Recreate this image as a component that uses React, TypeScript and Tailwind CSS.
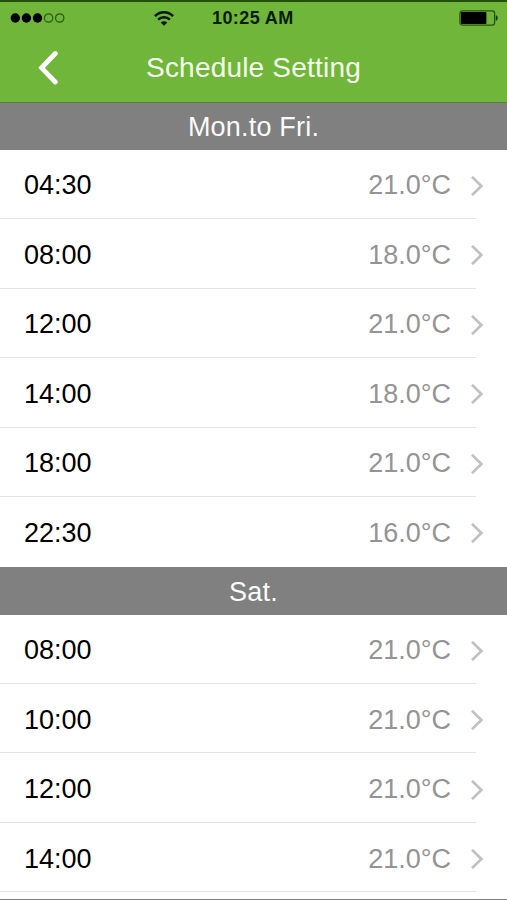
const weekday = [["04:30","21.0"],["08:00","18.0"],["12:00","21.0"],["14:00","18.0"],["18:00","21.0"],["22:30","16.0"]];
const saturday = [["08:00","21.0"],["10:00","21.0"],["12:00","21.0"],["14:00","21.0"]];

function Row({ time, temp, last }: { time: string; temp: string; last: boolean }) {
  return (
    <div className="flex h-[69.5px] flex-col">
      <div className="flex h-[68px] items-center pt-[3.5px] pl-6 pr-6">
        <span className="text-[27px] leading-none text-black">{time}</span>
        <span className="ml-auto text-[27px] leading-none text-[#949494]">{temp}°C</span>
        <svg className="ml-5 h-5 w-[12px]" viewBox="0 0 12 20" fill="none" stroke="#c0c0c0" strokeWidth="2.6">
          <path d="M1 .8 10.4 10 1 19.2" />
        </svg>
      </div>
      {!last && <div className="h-px w-[476px] bg-[#e4e4e4]" />}
    </div>
  );
}

function Section({ title, rows, open }: { title: string; rows: string[][]; open?: boolean }) {
  return (
    <section>
      <h2 className="flex h-[47.6px] items-center justify-center bg-[#808080] pt-[1.6px] text-[27px] tracking-[0.2px] text-[#fafafa]">{title}</h2>
      {rows.map(([time, temp], i) => (
        <Row key={time} time={time} temp={temp} last={!open && i === rows.length - 1} />
      ))}
    </section>
  );
}

function StatusBar() {
  return (
    <div className="flex h-[34px] items-center border-t-2 border-[#235008] pr-[9px] pl-[10px]">
      <svg className="h-3 w-14" viewBox="0 0 56 12">
        <circle cx="5.3" cy="6" r="4.7" />
        <circle cx="16.4" cy="6" r="4.7" />
        <circle cx="27.5" cy="6" r="4.7" />
        <circle cx="38.6" cy="6" r="4.2" fill="none" stroke="#2d5912" strokeWidth="1.2" />
        <circle cx="49.7" cy="6" r="4.2" fill="none" stroke="#2d5912" strokeWidth="1.2" />
      </svg>
      <svg className="ml-[88px] h-[15px] w-5" viewBox="0 0 20 15" fill="none" stroke="#061800" strokeWidth="2.4">
        <path d="M.9 5.2C6-.1 14-.1 19.1 5.2" />
        <path d="M4.1 8.7C7.3 5.4 12.7 5.4 15.9 8.7" />
        <path d="M10 14.8 6.7 11.5C8.6 9.8 11.4 9.8 13.3 11.5Z" fill="#061800" stroke="none" />
      </svg>
      <span className="ml-[38px] text-[18px] leading-none font-bold tracking-[0.4px] text-[#081d00]">10:25 AM</span>
      <svg className="ml-auto h-4 w-[39px]" viewBox="0 0 39 16">
        <rect x="1" y=".9" width="34.6" height="14.2" rx="2.4" fill="none" stroke="#27520c" strokeWidth="1.3" />
        <rect x="2" y="2" width="25.4" height="12" rx=".8" />
        <path d="M36.8 5.2c2.6.5 2.6 5.1 0 5.6z" fill="#173c05" />
      </svg>
    </div>
  );
}

export default function App() {
  return (
    <div className="flex h-[900px] w-[507px] flex-col overflow-hidden border-b border-[#808080] bg-white font-['Liberation_Sans',Arial,sans-serif]">
      <header className="h-[102.6px] shrink-0 border-b border-[#5f7d3c] bg-[#6fb63a]">
        <StatusBar />
        <div className="grid h-[67px] grid-cols-[100px_1fr_100px] items-center">
          <svg className="ml-[38px] h-[35px] w-5" viewBox="0 0 20 35" fill="none" stroke="#fff" strokeWidth="4.8" strokeLinecap="round">
            <path d="M17.3 3.5 3.5 17.8 17.3 32" />
          </svg>
          <h1 className="text-center text-[28px] leading-none whitespace-nowrap tracking-[0.2px] text-[#f6ffee]">Schedule Setting</h1>
        </div>
      </header>
      <main className="min-h-0 flex-1 overflow-hidden">
        <Section title="Mon.to Fri." rows={weekday} />
        <Section title="Sat." rows={saturday} open />
      </main>
    </div>
  );
}
